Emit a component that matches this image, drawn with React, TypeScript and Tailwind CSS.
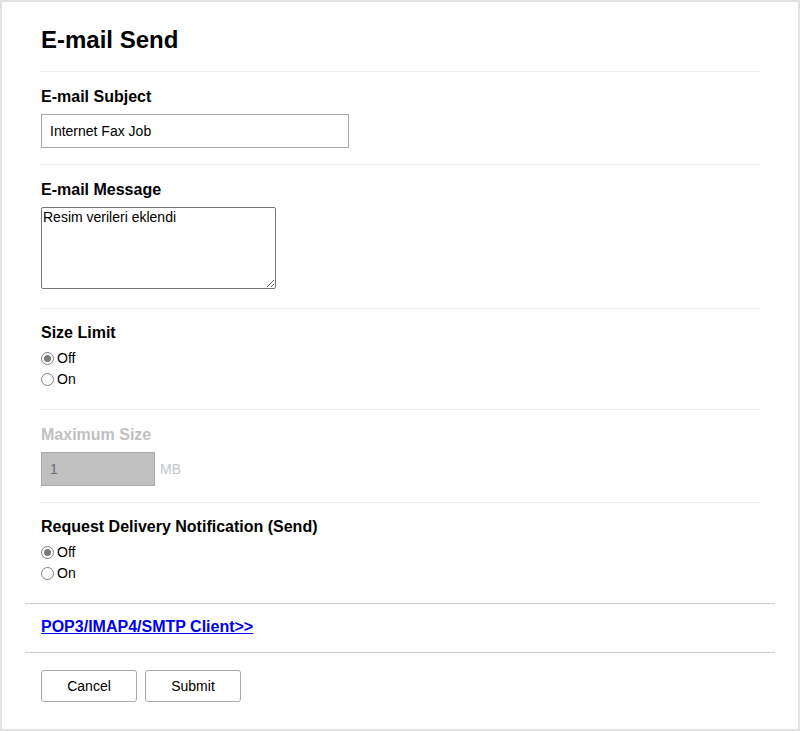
import React from "react"

function Radio({ checked, label }: { checked?: boolean; label: string }) {
  return (
    <div className="flex items-center h-[21px] text-[14px]">
      <span className="w-[13px] h-[13px] rounded-full border border-[#808080] bg-white flex items-center justify-center mr-[3px]">
        {checked && <span className="w-[7px] h-[7px] rounded-full bg-[#7b7b7b]" />}
      </span>
      <span>{label}</span>
    </div>
  )
}

function Section({ children, className = "" }: { children: React.ReactNode; className?: string }) {
  return <div className={"border-t border-[#ececec] " + className}>{children}</div>
}

export default function App() {
  return (
    <div
      className="w-[800px] h-[731px] border-2 border-[#e3e3e3] bg-white text-black"
      style={{ fontFamily: '"Liberation Sans", Arial, sans-serif' }}
    >
      <div className="px-[23px]">
        <div className="px-4">
          <h1 className="text-[24px] font-bold leading-[28px] pt-[24px] pb-[17px]">E-mail Send</h1>

          <Section className="pt-4 pb-4">
            <div className="text-[16px] font-bold leading-[18px] mb-2">E-mail Subject</div>
            <input
              readOnly
              defaultValue="Internet Fax Job"
              className="block w-[308px] h-[34px] border border-[#a9a9a9] px-2 text-[14px] outline-none"
            />
          </Section>

          <Section className="pt-4 pb-[19px]">
            <div className="text-[16px] font-bold leading-[18px] mb-2">E-mail Message</div>
            <textarea
              readOnly
              defaultValue="Resim verileri eklendi"
              className="block w-[235px] h-[82px] border border-[#767676] rounded-[2px] p-[1px] text-[14px] leading-[16px] outline-none resize"
            />
          </Section>

          <Section className="pt-[15px] pb-[19px]">
            <div className="text-[16px] font-bold leading-[18px] mb-[6px]">Size Limit</div>
            <Radio checked label="Off" />
            <Radio label="On" />
          </Section>

          <Section className="pt-4 pb-4">
            <div className="text-[16px] font-bold leading-[18px] mb-2 text-[#c0c0c0]">Maximum Size</div>
            <div className="flex items-center">
              <div className="w-[114px] h-[34px] border border-[#a9a9a9] bg-[#c0c0c0] px-2 text-[14px] text-[#6d6d6d] flex items-center">
                1
              </div>
              <span className="ml-[5px] text-[14px] text-[#c2c6cc]">MB</span>
            </div>
          </Section>

          <Section className="pt-[15px] pb-[19px]">
            <div className="text-[16px] font-bold leading-[18px] mb-[6px]">Request Delivery Notification (Send)</div>
            <Radio checked label="Off" />
            <Radio label="On" />
          </Section>
        </div>

        <div className="border-t border-[#cccccc] px-4 pt-[14px] pb-[16px]">
          <a href="#" className="block w-fit text-[16px] font-bold leading-[18px] text-[#0000ee] underline">
            POP3/IMAP4/SMTP Client&gt;&gt;
          </a>
        </div>

        <div className="border-t border-[#cccccc] px-4 pt-[17px] flex gap-2">
          <button className="w-[96px] h-[32px] border border-[#a9a9a9] rounded-[3px] bg-white text-[14px]">Cancel</button>
          <button className="w-[96px] h-[32px] border border-[#a9a9a9] rounded-[3px] bg-white text-[14px]">Submit</button>
        </div>
      </div>
    </div>
  )
}
